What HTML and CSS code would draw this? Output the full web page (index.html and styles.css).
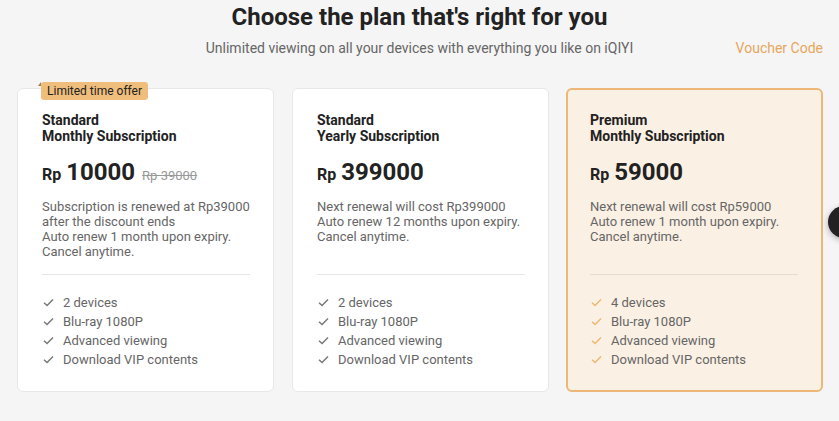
FILE: index.html
```html
<!DOCTYPE html>
<html lang="en">
<head>
<meta charset="utf-8">
<title>Choose the plan</title>
<link rel="stylesheet" href="styles.css">
</head>
<body>
<div class="page">
  <h1 class="title">Choose the plan that's right for you</h1>
  <div class="subrow">
    <p class="subtitle">Unlimited viewing on all your devices with everything you like on iQIYI</p>
    <a class="voucher">Voucher Code</a>
  </div>
  <div class="cards">
    <div class="card">
      <div class="badge">Limited time offer</div>
      <div class="name">Standard<br>Monthly Subscription</div>
      <div class="price"><span class="cur">Rp</span><span class="amount">10000</span><span class="old">Rp 39000</span></div>
      <div class="desc">Subscription is renewed at Rp39000<br>after the discount ends<br>Auto renew 1 month upon expiry.<br>Cancel anytime.</div>
      <div class="divider"></div>
      <ul class="features">
        <li><svg class="check" viewBox="0 0 12 10"><path d="M1 5.2 L4.4 8.4 L11 1.6" fill="none" stroke="currentColor" stroke-width="1.6"/></svg>2 devices</li>
        <li><svg class="check" viewBox="0 0 12 10"><path d="M1 5.2 L4.4 8.4 L11 1.6" fill="none" stroke="currentColor" stroke-width="1.6"/></svg>Blu-ray 1080P</li>
        <li><svg class="check" viewBox="0 0 12 10"><path d="M1 5.2 L4.4 8.4 L11 1.6" fill="none" stroke="currentColor" stroke-width="1.6"/></svg>Advanced viewing</li>
        <li><svg class="check" viewBox="0 0 12 10"><path d="M1 5.2 L4.4 8.4 L11 1.6" fill="none" stroke="currentColor" stroke-width="1.6"/></svg>Download VIP contents</li>
      </ul>
    </div>
    <div class="card">
      <div class="name">Standard<br>Yearly Subscription</div>
      <div class="price"><span class="cur">Rp</span><span class="amount">399000</span></div>
      <div class="desc">Next renewal will cost Rp399000<br>Auto renew 12 months upon expiry.<br>Cancel anytime.</div>
      <div class="divider"></div>
      <ul class="features">
        <li><svg class="check" viewBox="0 0 12 10"><path d="M1 5.2 L4.4 8.4 L11 1.6" fill="none" stroke="currentColor" stroke-width="1.6"/></svg>2 devices</li>
        <li><svg class="check" viewBox="0 0 12 10"><path d="M1 5.2 L4.4 8.4 L11 1.6" fill="none" stroke="currentColor" stroke-width="1.6"/></svg>Blu-ray 1080P</li>
        <li><svg class="check" viewBox="0 0 12 10"><path d="M1 5.2 L4.4 8.4 L11 1.6" fill="none" stroke="currentColor" stroke-width="1.6"/></svg>Advanced viewing</li>
        <li><svg class="check" viewBox="0 0 12 10"><path d="M1 5.2 L4.4 8.4 L11 1.6" fill="none" stroke="currentColor" stroke-width="1.6"/></svg>Download VIP contents</li>
      </ul>
    </div>
    <div class="card selected">
      <div class="name">Premium<br>Monthly Subscription</div>
      <div class="price"><span class="cur">Rp</span><span class="amount">59000</span></div>
      <div class="desc">Next renewal will cost Rp59000<br>Auto renew 1 month upon expiry.<br>Cancel anytime.</div>
      <div class="divider"></div>
      <ul class="features">
        <li><svg class="check" viewBox="0 0 12 10"><path d="M1 5.2 L4.4 8.4 L11 1.6" fill="none" stroke="currentColor" stroke-width="1.6"/></svg>4 devices</li>
        <li><svg class="check" viewBox="0 0 12 10"><path d="M1 5.2 L4.4 8.4 L11 1.6" fill="none" stroke="currentColor" stroke-width="1.6"/></svg>Blu-ray 1080P</li>
        <li><svg class="check" viewBox="0 0 12 10"><path d="M1 5.2 L4.4 8.4 L11 1.6" fill="none" stroke="currentColor" stroke-width="1.6"/></svg>Advanced viewing</li>
        <li><svg class="check" viewBox="0 0 12 10"><path d="M1 5.2 L4.4 8.4 L11 1.6" fill="none" stroke="currentColor" stroke-width="1.6"/></svg>Download VIP contents</li>
      </ul>
    </div>
  </div>
</div>
<div class="float-btn"></div>
</body>
</html>
```

FILE: styles.css
```css
* { box-sizing: border-box; }
html, body { margin: 0; padding: 0; }
body {
  background: #f5f5f5;
  font-family: Roboto, "Liberation Sans", sans-serif;
  color: #222;
  width: 839px;
  height: 421px;
  overflow: hidden;
  position: relative;
}
.page {
  width: 805px;
  margin: 0 auto;
  padding-top: 2px;
}
.title {
  margin: 0;
  text-align: center;
  font-size: 24px;
  font-weight: 700;
  line-height: 30px;
  color: #222;
}
.subrow {
  position: relative;
  margin-top: 6px;
  height: 20px;
}
.subtitle {
  margin: 0;
  text-align: center;
  font-size: 14px;
  line-height: 20px;
  color: #666;
}
.voucher {
  position: absolute;
  right: -1px;
  top: 0;
  font-size: 14px;
  line-height: 20px;
  color: #e8a65e;
}
.cards {
  margin-top: 30px;
  display: flex;
  gap: 18px;
  align-items: stretch;
}
.card {
  position: relative;
  flex: 0 0 257px;
  height: 304px;
  background: #fff;
  border: 1px solid #e8e8e8;
  border-radius: 6px;
  padding: 23px 18px 0 24px;
}
.card.selected {
  margin-left: -1px;
  background: #fbf0e4;
  border: 2px solid #eeb777;
  padding: 22px 18px 0 22px;
}
.badge {
  position: absolute;
  left: 23px;
  top: -7px;
  height: 18px;
  padding: 0 6px;
  background: #f0be7c;
  border-radius: 3px;
  font-size: 12px;
  line-height: 18px;
  color: #222;
}
.badge::before {
  content: "";
  position: absolute;
  left: -3px;
  top: 0;
  border-style: solid;
  border-width: 0 0 4px 3px;
  border-color: transparent transparent #9a7f5c transparent;
}
.name {
  font-size: 14px;
  font-weight: 700;
  line-height: 16px;
  color: #222;
}
.price {
  margin-top: 14px;
  display: flex;
  align-items: baseline;
  height: 28px;
  line-height: 28px;
}
.cur {
  font-size: 16px;
  font-weight: 700;
  margin-right: 5px;
}
.amount {
  font-size: 24px;
  font-weight: 700;
}
.old {
  font-size: 13px;
  color: #999;
  text-decoration: line-through;
  margin-left: 7px;
}
.desc {
  margin-top: 13px;
  height: 60px;
  font-size: 13px;
  line-height: 15px;
  color: #666;
  white-space: nowrap;
}
.divider {
  margin-top: 15px;
  height: 1px;
  width: 208px;
  background: #e5e5e5;
}
.selected .divider { background: #e8dccd; }
.features {
  list-style: none;
  margin: 18px 0 0 0;
  padding: 0;
}
.features li {
  display: flex;
  align-items: center;
  font-size: 13px;
  line-height: 19px;
  color: #666;
}
.check {
  width: 11px;
  height: 9px;
  margin-left: 1px;
  margin-right: 9px;
  color: #777;
}
.selected .check { color: #f0b772; }
.float-btn {
  position: absolute;
  left: 828px;
  top: 206px;
  width: 32px;
  height: 32px;
  border-radius: 50%;
  background: #222;
  box-shadow: 0 2px 6px rgba(0,0,0,0.3);
}
```
